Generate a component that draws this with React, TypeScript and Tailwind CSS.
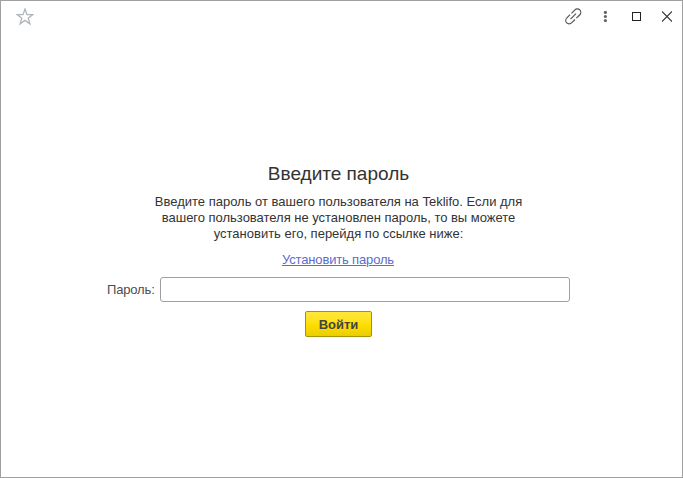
export default function App() {
  return (
    <main className="flex h-[478px] w-[683px] flex-col border border-[#a0a0a0] bg-white font-['Liberation_Sans',Arial,sans-serif] text-[#333]">
      <header className="flex h-[31px] shrink-0 items-center justify-between pl-[15px] pr-[10px]">
        <button aria-label="star">
          <svg width="18" height="18" viewBox="0 0 18 18" fill="none" stroke="#b0b5ba" strokeWidth="1.3">
            <path d="M9 1 11 6.6h5.8l-4.6 3.6 1.7 5.6L9 12.4l-4.9 3.4 1.7-5.6L1.2 6.6H7z" />
          </svg>
        </button>
        <div className="flex items-center text-[#555]">
          <svg width="18" height="18" viewBox="0 0 18 18" fill="none" stroke="currentColor" strokeWidth="1.2">
            <path d="M7.5 5.3 10.7 2.1c1.5-1.5 3.8-1.5 5.1-.2s1.3 3.6-.2 5.1L12.4 10.2M11 11.5l-3.2 3.2c-1.5 1.5-3.8 1.5-5.1.2s-1.3-3.6.2-5.1L6.1 6.6M6.5 11.1l5.5-5.5" />
          </svg>
          <svg className="ml-[21px]" width="4" height="11" viewBox="0 0 4 11" fill="#666">
            <circle cx="2.4" cy="1.5" r="1.6" /><circle cx="2.4" cy="5.5" r="1.6" /><circle cx="2.4" cy="9.5" r="1.6" />
          </svg>
          <i className="ml-[25px] size-[9px] border border-[#222]" />
          <svg className="ml-[21px]" width="10" height="11" viewBox="0 0 10 11" stroke="#333" strokeWidth="1.1"><path d="m0 .5 10 10m0-10-10 10" /></svg>
        </div>
      </header>
      <section className="flex flex-col items-center pr-[6px] pt-[130px]">
        <h1 className="text-[19px] leading-6">Введите пароль</h1>
        <p className="mt-2 text-center text-[13px] leading-4">
          Введите пароль от вашего пользователя на Teklifo. Если для<br />
          <span className="tracking-[-0.02px]">вашего пользователя не установлен пароль, то вы можете</span><br />
          установить его, перейдя по ссылке ниже:
        </p>
        <a className="mt-[10px] mr-px text-[13px] leading-4 tracking-[-0.16px] text-[#5b6dcb] underline">Установить пароль</a>
      </section>
      <form className="flex flex-col">
        <label className="mt-[9px] flex items-center pl-[106px] text-[13px]">
          <span className="w-[53px] shrink-0 whitespace-nowrap tracking-[-0.16px] text-[#4d4d4d]">Пароль:</span>
          <input type="password" className="h-[25px] w-[410px] rounded-[3px] border border-[#a0a0a0] outline-none" />
        </label>
        <button type="button" className="ml-[304px] mt-[9px] h-[26px] w-[67px] rounded-[2px] border border-[#a59400] bg-linear-to-b from-[#ffe83b] via-[#ffdf00] to-[#ebcd00] pt-[2px] text-[13px] font-bold text-[#444]">Войти</button>
      </form>
    </main>
  );
}
